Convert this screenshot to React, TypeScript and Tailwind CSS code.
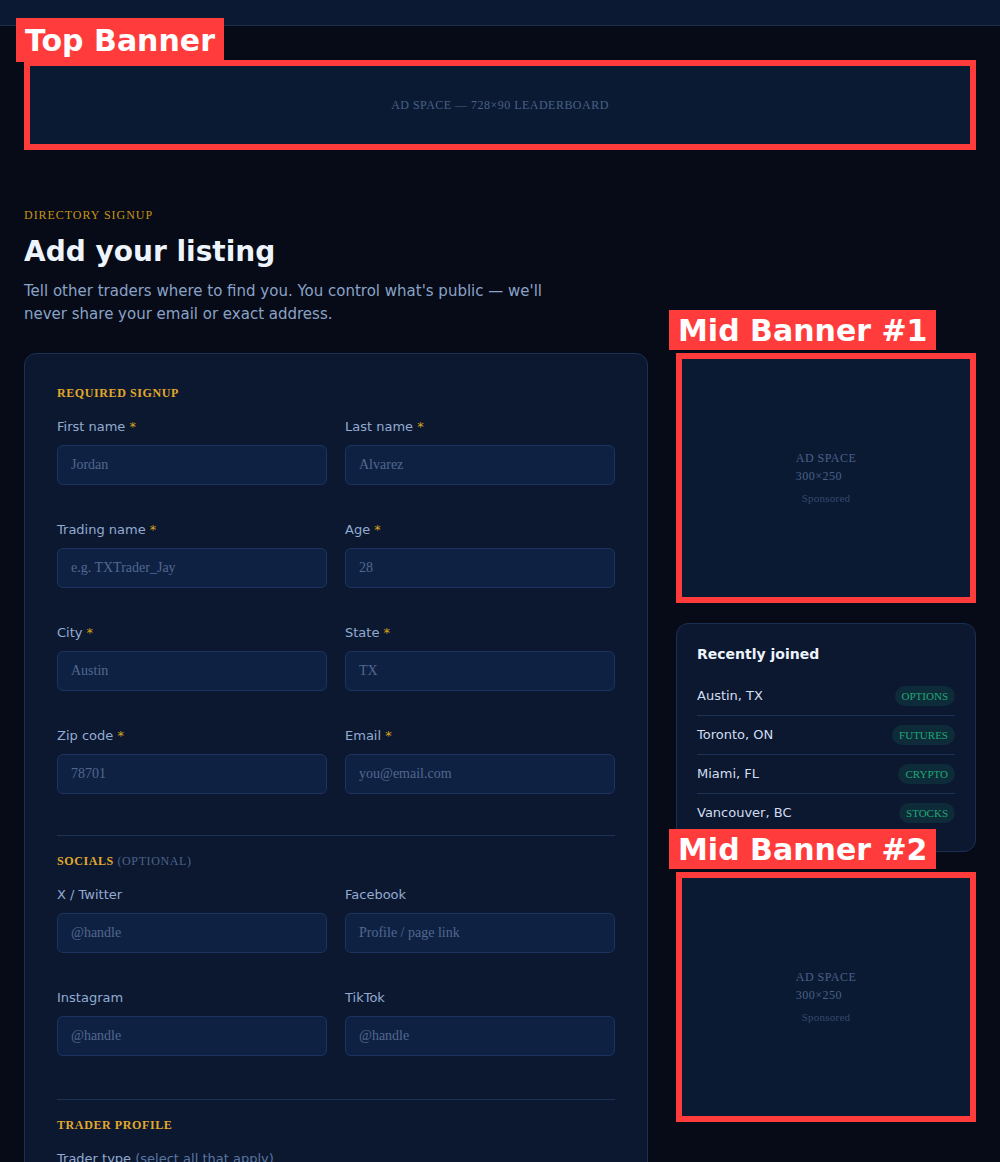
import React from "react";

type Field = { label: string; placeholder: string; required?: boolean };

const requiredFields: Field[] = [
  { label: "First name", placeholder: "Jordan", required: true },
  { label: "Last name", placeholder: "Alvarez", required: true },
  { label: "Trading name", placeholder: "e.g. TXTrader_Jay", required: true },
  { label: "Age", placeholder: "28", required: true },
  { label: "City", placeholder: "Austin", required: true },
  { label: "State", placeholder: "TX", required: true },
  { label: "Zip code", placeholder: "78701", required: true },
  { label: "Email", placeholder: "you@email.com", required: true },
];

const socialFields: Field[] = [
  { label: "X / Twitter", placeholder: "@handle" },
  { label: "Facebook", placeholder: "Profile / page link" },
  { label: "Instagram", placeholder: "@handle" },
  { label: "TikTok", placeholder: "@handle" },
];

const recent = [
  { place: "Austin, TX", tag: "OPTIONS" },
  { place: "Toronto, ON", tag: "FUTURES" },
  { place: "Miami, FL", tag: "CRYPTO" },
  { place: "Vancouver, BC", tag: "STOCKS" },
];

const traderTypes = ["Day trader", "Swing trader", "Options", "Futures", "Crypto", "Forex", "Stocks", "Long-term investor"];

function SlotTag({ text, className }: { text: string; className: string }) {
  return (
    <div
      className={`absolute z-10 flex items-center whitespace-nowrap bg-[#ff3b3b] px-[9px] font-['DejaVu_Sans',sans-serif] text-[30px] font-bold text-white ${className}`}
    >
      {text}
    </div>
  );
}

function SlotFrame() {
  return <div className="pointer-events-none absolute inset-0 border-[6px] border-[#ff3b3b]" />;
}

function SquareAd({ tag }: { tag: string }) {
  return (
    <div className="relative h-[250px] w-[300px] bg-[#0b1a33]">
      <SlotTag text={tag} className="left-[-7px] top-[-43px] h-[40px]" />
      <SlotFrame />
      <div className="flex h-full flex-col items-center justify-center pb-[2px] font-['Liberation_Serif',serif]">
        <div className="text-left text-[12px] leading-[18px] tracking-[0.04em] text-[#4a6088]">
          <div>AD SPACE</div>
          <div>300×250</div>
        </div>
        <div className="mt-[6px] text-[11px] leading-[14px] tracking-[0.02em] text-[#34486b]">Sponsored</div>
      </div>
    </div>
  );
}

function Input({ field }: { field: Field }) {
  return (
    <label className="block">
      <span className="block text-[13px] leading-5 text-[#93abd0]">
        {field.label}
        {field.required && <span className="text-[#d9a21b]"> *</span>}
      </span>
      <input
        placeholder={field.placeholder}
        className="mt-2 block h-10 w-full rounded-md border border-[#1d3460] bg-[#0f2142] px-[13px] font-['Liberation_Serif',serif] text-[14px] text-[#c9d6ea] outline-none placeholder:text-[#4f6890]"
      />
    </label>
  );
}

function SectionTitle({ children }: { children: React.ReactNode }) {
  return (
    <h2 className="mb-4 font-['Liberation_Serif',serif] text-[12px] font-bold leading-4 tracking-[0.05em] text-[#e2a82c]">
      {children}
    </h2>
  );
}

export default function App() {
  return (
    <div className="min-h-[1162px] bg-[#060b17] font-['DejaVu_Sans',sans-serif]">
      <header className="h-[26px] border-b border-[#1c2c49] bg-[#0b1933]" />

      <main className="mx-auto max-w-[1000px] px-6 pb-16">
        {/* leaderboard slot */}
        <div className="relative mt-[34px] h-[90px] bg-[#0b1a33]">
          <SlotTag text="Top Banner" className="left-[-8px] top-[-42px] h-[44px]" />
          <SlotFrame />
          <div className="flex h-full items-center justify-center font-['Liberation_Serif',serif] text-[12px] tracking-[0.04em] text-[#4a6088]">
            AD SPACE — 728×90 LEADERBOARD
          </div>
        </div>

        <section className="mt-[57px]">
          <div className="font-['Liberation_Serif',serif] text-[12px] leading-4 tracking-[0.08em] text-[#c89416]">
            DIRECTORY SIGNUP
          </div>
          <h1 className="mt-[12px] text-[28px] font-bold leading-[34px] text-[#eef4fc]">Add your listing</h1>
          <p className="mt-[11px] max-w-[540px] text-[15px] leading-[23px] text-[#8aa2c6]">
            Tell other traders where to find you. You control what's public — we'll never share your email or exact
            address.
          </p>
        </section>

        <div className="mt-[27px] grid grid-cols-[1fr_300px] items-start gap-7">
          <form className="rounded-xl border border-[#1b2f52] bg-[#0b1830] px-8 pb-8 pt-[31px]">
            <SectionTitle>REQUIRED SIGNUP</SectionTitle>
            <div className="grid grid-cols-2 gap-x-[18px] gap-y-[35px]">
              {requiredFields.map((f) => (
                <Input key={f.label} field={f} />
              ))}
            </div>

            <div className="mt-[41px] border-t border-[#1c3157] pt-[17px]">
              <SectionTitle>
                SOCIALS <span className="font-normal text-[#4d6389]">(OPTIONAL)</span>
              </SectionTitle>
              <div className="grid grid-cols-2 gap-x-[18px] gap-y-[35px]">
                {socialFields.map((f) => (
                  <Input key={f.label} field={f} />
                ))}
              </div>
            </div>

            <div className="mt-[43px] border-t border-[#1c3157] pt-[17px]">
              <SectionTitle>TRADER PROFILE</SectionTitle>
              <div className="text-[13px] leading-5 text-[#93abd0]">
                Trader type <span className="text-[#5a75a0]">(select all that apply)</span>
              </div>
              <div className="mt-3 flex flex-wrap gap-2">
                {traderTypes.map((t) => (
                  <span
                    key={t}
                    className="rounded-full border border-[#1d3460] bg-[#0f2142] px-3 py-1 text-[12px] text-[#93abd0]"
                  >
                    {t}
                  </span>
                ))}
              </div>
            </div>
          </form>

          <aside className="flex flex-col">
            <SquareAd tag="Mid Banner #1" />

            <div className="mt-5 rounded-xl border border-[#1b2f52] bg-[#0b1830] px-5 pb-[19px] pt-5">
              <h3 className="text-[14px] font-bold leading-5 text-[#eef4fc]">Recently joined</h3>
              <ul className="mt-[13px]">
                {recent.map((r, i) => (
                  <li
                    key={r.place}
                    className={`flex h-[38px] items-center justify-between ${
                      i < recent.length - 1 ? "box-content border-b border-[#1c3157]" : ""
                    }`}
                  >
                    <span className="text-[13px] text-[#d2ddef]">{r.place}</span>
                    <span className="flex h-5 items-center rounded-full bg-[#0d2b38] px-[7px] font-['Liberation_Serif',serif] text-[11px] text-[#20a877]">
                      {r.tag}
                    </span>
                  </li>
                ))}
              </ul>
            </div>

            <div className="mt-[20px]">
              <SquareAd tag="Mid Banner #2" />
            </div>
          </aside>
        </div>
      </main>
    </div>
  );
}
